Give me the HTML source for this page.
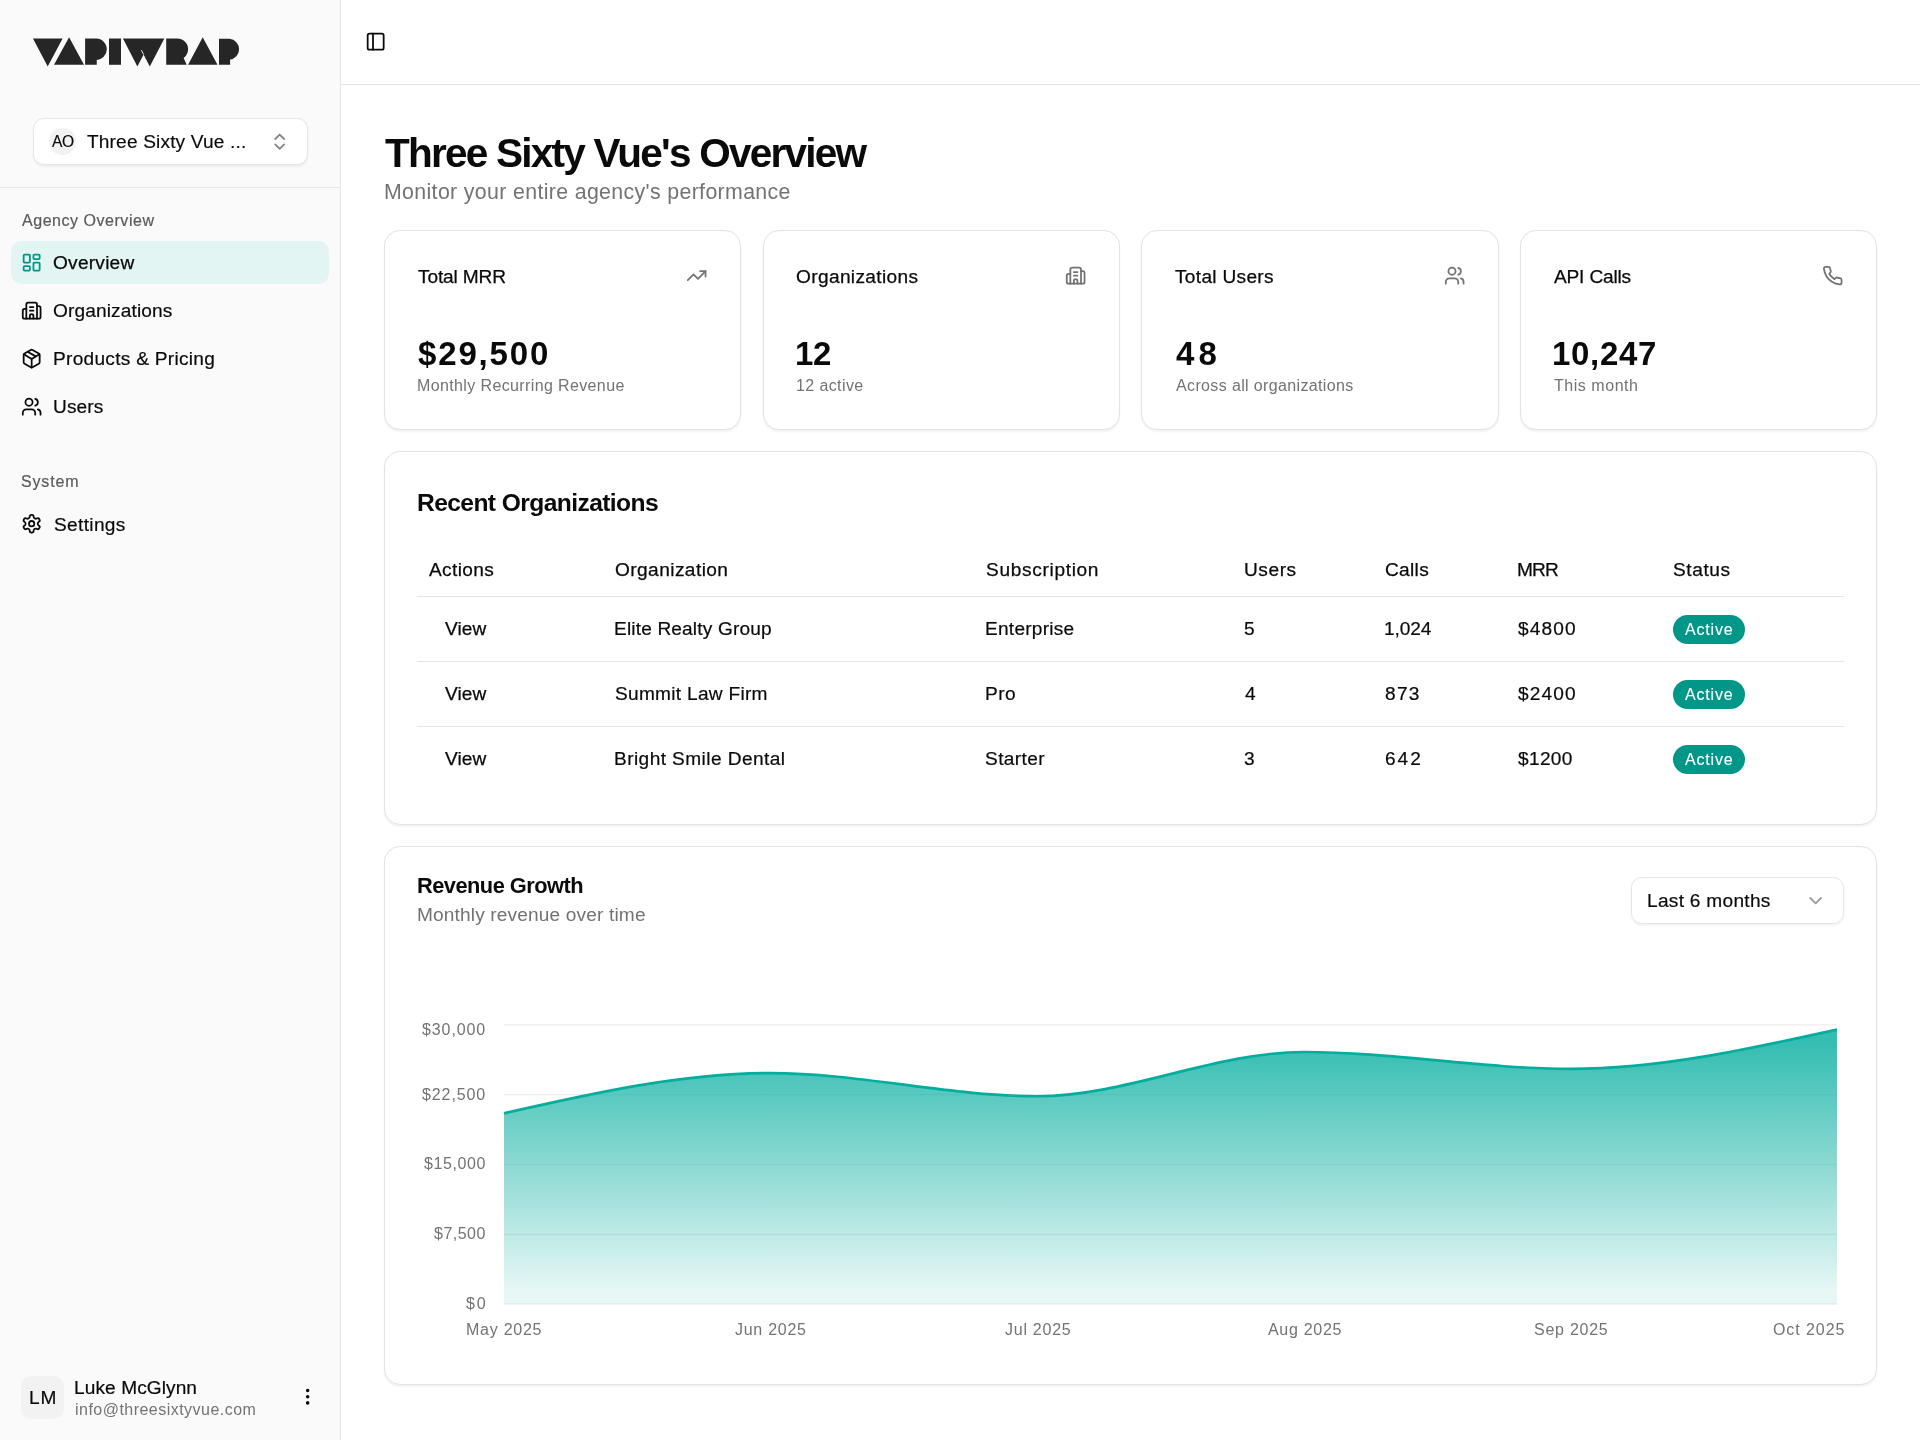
<!DOCTYPE html>
<html><head><meta charset="utf-8"><title>Overview</title><style>
html,body{margin:0;padding:0}
body{width:1920px;height:1440px;overflow:hidden;position:relative;background:#fff;font-family:"Liberation Sans",sans-serif;color:#0a0a0a}
.t{position:absolute;white-space:nowrap;line-height:1;will-change:transform}
.ic{position:absolute;overflow:visible}
.box{position:absolute;box-sizing:border-box}
.card{position:absolute;box-sizing:border-box;background:#fff;border:1.333px solid #e3e3e3;border-radius:16px;box-shadow:0 1.333px 2px rgba(0,0,0,0.05)}
</style></head>
<body>
<div class="box" style="left:0;top:0;width:340px;height:1440px;background:#fafafa"></div>
<div class="box" style="left:340px;top:0;width:1.333px;height:1440px;background:#e5e5e5"></div>
<div class="box" style="left:0;top:186.67px;width:340px;height:1.333px;background:#e5e5e5"></div>
<div class="box" style="left:341.33px;top:84px;width:1578.67px;height:1.333px;background:#e5e5e5"></div>
<div class="box" style="left:33px;top:117.5px;width:274.5px;height:47px;background:#fff;border:1.333px solid #e5e5e5;border-radius:10.67px;box-shadow:0 1.333px 2px rgba(0,0,0,0.05)"></div>
<div class="box" style="left:49.3px;top:127.9px;width:26.67px;height:26.67px;border-radius:50%;background:#f2f2f2"></div>
<div class="box" style="left:10.67px;top:241.33px;width:318.67px;height:42.67px;border-radius:10.67px;background:#e2f5f3"></div>
<div class="box" style="left:21.33px;top:1376px;width:42.67px;height:42.67px;border-radius:10.67px;background:#f2f2f2"></div>
<div class="card" style="left:384.00px;top:229.5px;width:357.33px;height:200.8px"></div>
<div class="card" style="left:762.67px;top:229.5px;width:357.33px;height:200.8px"></div>
<div class="card" style="left:1141.33px;top:229.5px;width:357.33px;height:200.8px"></div>
<div class="card" style="left:1520.00px;top:229.5px;width:357.33px;height:200.8px"></div>
<div class="card" style="left:384px;top:451.33px;width:1493.33px;height:373.5px"></div>
<div class="card" style="left:384px;top:845.6px;width:1493.33px;height:539.7px"></div>
<div class="box" style="left:417.33px;top:595.5px;width:1426.67px;height:1.333px;background:#e5e5e5"></div>
<div class="box" style="left:417.33px;top:660.67px;width:1426.67px;height:1.333px;background:#e5e5e5"></div>
<div class="box" style="left:417.33px;top:726px;width:1426.67px;height:1.333px;background:#e5e5e5"></div>
<div class="box" style="left:1672.5px;top:614.50px;width:72.3px;height:29.2px;border-radius:14.6px;background:#009688"></div>
<div class="box" style="left:1672.5px;top:679.70px;width:72.3px;height:29.2px;border-radius:14.6px;background:#009688"></div>
<div class="box" style="left:1672.5px;top:744.90px;width:72.3px;height:29.2px;border-radius:14.6px;background:#009688"></div>
<div class="box" style="left:1631px;top:877px;width:212.67px;height:47.33px;background:#fff;border:1.333px solid #e5e5e5;border-radius:10.67px;box-shadow:0 1.333px 2px rgba(0,0,0,0.05)"></div>
<svg style="position:absolute;left:0;top:0" width="260" height="90" viewBox="0 0 260 90"><g fill="#262626" stroke="#ffffff" stroke-width="0.8" paint-order="stroke"><path d="M32.95,38.5 L62.6,38.5 L47.7,66.4 Z"/><path d="M69.1,37.2 L84.0,64.8 L54.0,64.8 Z"/><path d="M85.1,38.5 L96.2,38.5 A10.6,10.7 0 0 1 96.2,59.9 L96.75,59.9 L96.75,64.8 L85.1,64.8 Z"/><path d="M109,38.5 L121,38.5 L121,64.8 L109,64.8 Z"/><path d="M122.95,38.5 L164.35,38.5 L149.8,66.4 L143.6,54.4 L137.4,66.4 Z"/><path d="M166.2,38.5 L177.2,38.5 A10.6,10.7 0 0 1 183.6,58.0 L186.7,64.8 L166.2,64.8 Z"/><path d="M202.7,37.2 L217.5,64.8 L188.1,64.8 Z"/><path d="M219,38.7 L229.6,38.7 A10.5,10.6 0 0 1 229.6,59.8 L230.1,59.8 L230.1,64.8 L219,64.8 Z"/></g><path d="M143.6,54.4 L141.3,50.2" stroke="#fff" stroke-width="0.9"/></svg>
<svg style="position:absolute;left:0;top:0" width="1920" height="1440" viewBox="0 0 1920 1440">
<defs><linearGradient id="g" x1="0" y1="0" x2="0" y2="1"><stop offset="5%" stop-color="#02ad9e" stop-opacity="0.8"/><stop offset="95%" stop-color="#02ad9e" stop-opacity="0.1"/></linearGradient></defs>
<g stroke="#eeeeee" stroke-width="1.3"><line x1="504" x2="1837" y1="1024.9" y2="1024.9"/><line x1="504" x2="1837" y1="1094.7" y2="1094.7"/><line x1="504" x2="1837" y1="1164.5" y2="1164.5"/><line x1="504" x2="1837" y1="1234.3" y2="1234.3"/><line x1="504" x2="1837" y1="1304.1" y2="1304.1"/></g>
<path d="M504.00,1113.30C592.87,1093.20,681.73,1073.10,770.60,1073.10C859.47,1073.10,948.33,1096.25,1037.20,1096.25C1126.07,1096.25,1214.93,1052.00,1303.80,1052.00C1392.67,1052.00,1481.53,1068.90,1570.40,1068.90C1659.27,1068.90,1748.13,1049.25,1837.00,1029.60L1837,1304.1L504,1304.1Z" fill="url(#g)"/>
<path d="M504.00,1113.30C592.87,1093.20,681.73,1073.10,770.60,1073.10C859.47,1073.10,948.33,1096.25,1037.20,1096.25C1126.07,1096.25,1214.93,1052.00,1303.80,1052.00C1392.67,1052.00,1481.53,1068.90,1570.40,1068.90C1659.27,1068.90,1748.13,1049.25,1837.00,1029.60" fill="none" stroke="#02ad9e" stroke-width="2.67"/>
</svg>
<svg class="ic" style="left:21.17px;top:251.95px;width:21.333px;height:21.333px" viewBox="0 0 24 24" fill="none" stroke="#009688" stroke-width="2" stroke-linecap="round" stroke-linejoin="round"><rect width="7" height="9" x="3" y="3" rx="1"/><rect width="7" height="5" x="14" y="3" rx="1"/><rect width="7" height="9" x="14" y="12" rx="1"/><rect width="7" height="5" x="3" y="16" rx="1"/></svg>
<svg class="ic" style="left:21.31px;top:299.92px;width:21.333px;height:21.333px" viewBox="0 0 24 24" fill="none" stroke="#0a0a0a" stroke-width="2" stroke-linecap="round" stroke-linejoin="round"><path d="M10 12h4"/><path d="M10 8h4"/><path d="M14 21v-3a2 2 0 0 0-4 0v3"/><path d="M6 10H4a2 2 0 0 0-2 2v7a2 2 0 0 0 2 2h16a2 2 0 0 0 2-2V9a2 2 0 0 0-2-2h-2"/><path d="M6 21V5a2 2 0 0 1 2-2h8a2 2 0 0 1 2 2v16"/></svg>
<svg class="ic" style="left:21.02px;top:348.09px;width:21.333px;height:21.333px" viewBox="0 0 24 24" fill="none" stroke="#0a0a0a" stroke-width="2" stroke-linecap="round" stroke-linejoin="round"><path d="M11 21.73a2 2 0 0 0 2 0l7-4A2 2 0 0 0 21 16V8a2 2 0 0 0-1-1.73l-7-4a2 2 0 0 0-2 0l-7 4A2 2 0 0 0 3 8v8a2 2 0 0 0 1 1.73z"/><path d="M12 22V12"/><path d="m3.3 7 7.703 4.734a2 2 0 0 0 1.994 0L20.7 7"/><path d="m7.5 4.27 9 5.15"/></svg>
<svg class="ic" style="left:21.31px;top:396.22px;width:21.333px;height:21.333px" viewBox="0 0 24 24" fill="none" stroke="#0a0a0a" stroke-width="2" stroke-linecap="round" stroke-linejoin="round"><path d="M16 21v-2a4 4 0 0 0-4-4H6a4 4 0 0 0-4 4v2"/><circle cx="9" cy="7" r="4"/><path d="M22 21v-2a4 4 0 0 0-3-3.87"/><path d="M16 3.13a4 4 0 0 1 0 7.75"/></svg>
<svg class="ic" style="left:20.99px;top:513.41px;width:21.333px;height:21.333px" viewBox="0 0 24 24" fill="none" stroke="#0a0a0a" stroke-width="2" stroke-linecap="round" stroke-linejoin="round"><path d="M12.22 2h-.44a2 2 0 0 0-2 2v.18a2 2 0 0 1-1 1.73l-.43.25a2 2 0 0 1-2 0l-.15-.08a2 2 0 0 0-2.73.73l-.22.38a2 2 0 0 0 .73 2.73l.15.1a2 2 0 0 1 1 1.72v.51a2 2 0 0 1-1 1.74l-.15.09a2 2 0 0 0-.73 2.73l.22.38a2 2 0 0 0 2.73.73l.15-.08a2 2 0 0 1 2 0l.43.25a2 2 0 0 1 1 1.73V20a2 2 0 0 0 2 2h.44a2 2 0 0 0 2-2v-.18a2 2 0 0 1 1-1.73l.43-.25a2 2 0 0 1 2 0l.15.08a2 2 0 0 0 2.73-.73l.22-.39a2 2 0 0 0-.73-2.73l-.15-.08a2 2 0 0 1-1-1.74v-.5a2 2 0 0 1 1-1.74l.15-.09a2 2 0 0 0 .73-2.73l-.22-.38a2 2 0 0 0-2.73-.73l-.15.08a2 2 0 0 1-2 0l-.43-.25a2 2 0 0 1-1-1.73V4a2 2 0 0 0-2-2z"/><circle cx="12" cy="12" r="3"/></svg>
<svg class="ic" style="left:269.07px;top:130.63px;width:21.333px;height:21.333px" viewBox="0 0 24 24" fill="none" stroke="#0a0a0a" stroke-width="2" stroke-linecap="round" stroke-linejoin="round" opacity="0.5"><path d="m7 15 5 5 5-5"/><path d="m7 9 5-5 5 5"/></svg>
<svg class="ic" style="left:297.08px;top:1386.14px;width:21.333px;height:21.333px" viewBox="0 0 24 24" fill="none" stroke="#0a0a0a" stroke-width="2" stroke-linecap="round" stroke-linejoin="round"><circle cx="12" cy="12" r="1"/><circle cx="12" cy="5" r="1"/><circle cx="12" cy="19" r="1"/></svg>
<svg class="ic" style="left:364.70px;top:31.40px;width:21.333px;height:21.333px" viewBox="0 0 24 24" fill="none" stroke="#0a0a0a" stroke-width="2" stroke-linecap="round" stroke-linejoin="round"><rect width="18" height="18" x="3" y="3" rx="2"/><path d="M9 3v18"/></svg>
<svg class="ic" style="left:686.20px;top:265.40px;width:21.333px;height:21.333px" viewBox="0 0 24 24" fill="none" stroke="#737373" stroke-width="2" stroke-linecap="round" stroke-linejoin="round"><polyline points="22 7 13.5 15.5 8.5 10.5 2 17"/><polyline points="16 7 22 7 22 13"/></svg>
<svg class="ic" style="left:1064.87px;top:265.40px;width:21.333px;height:21.333px" viewBox="0 0 24 24" fill="none" stroke="#737373" stroke-width="2" stroke-linecap="round" stroke-linejoin="round"><path d="M10 12h4"/><path d="M10 8h4"/><path d="M14 21v-3a2 2 0 0 0-4 0v3"/><path d="M6 10H4a2 2 0 0 0-2 2v7a2 2 0 0 0 2 2h16a2 2 0 0 0 2-2V9a2 2 0 0 0-2-2h-2"/><path d="M6 21V5a2 2 0 0 1 2-2h8a2 2 0 0 1 2 2v16"/></svg>
<svg class="ic" style="left:1443.53px;top:265.40px;width:21.333px;height:21.333px" viewBox="0 0 24 24" fill="none" stroke="#737373" stroke-width="2" stroke-linecap="round" stroke-linejoin="round"><path d="M16 21v-2a4 4 0 0 0-4-4H6a4 4 0 0 0-4 4v2"/><circle cx="9" cy="7" r="4"/><path d="M22 21v-2a4 4 0 0 0-3-3.87"/><path d="M16 3.13a4 4 0 0 1 0 7.75"/></svg>
<svg class="ic" style="left:1822.20px;top:265.40px;width:21.333px;height:21.333px" viewBox="0 0 24 24" fill="none" stroke="#737373" stroke-width="2" stroke-linecap="round" stroke-linejoin="round"><path d="M22 16.92v3a2 2 0 0 1-2.18 2 19.79 19.79 0 0 1-8.63-3.07 19.5 19.5 0 0 1-6-6 19.79 19.79 0 0 1-3.07-8.67A2 2 0 0 1 4.11 2h3a2 2 0 0 1 2 1.72 12.84 12.84 0 0 0 .7 2.81 2 2 0 0 1-.45 2.11L8.09 9.91a16 16 0 0 0 6 6l1.27-1.27a2 2 0 0 1 2.11-.45 12.84 12.84 0 0 0 2.81.7A2 2 0 0 1 22 16.92z"/></svg>
<svg class="ic" style="left:1805.16px;top:890.09px;width:21.333px;height:21.333px" viewBox="0 0 24 24" fill="none" stroke="#737373" stroke-width="2" stroke-linecap="round" stroke-linejoin="round" opacity="0.7"><path d="m6 9 6 6 6-6"/></svg>
<div class="t" style="left:52.00px;top:133.99px;font-size:15.6px;letter-spacing:-0.405px;-webkit-text-stroke:0.15px currentColor;">AO</div>
<div class="t" style="left:87.10px;top:131.63px;font-size:19.1px;letter-spacing:0.161px;-webkit-text-stroke:0.15px currentColor;">Three Sixty Vue ...</div>
<div class="t" style="left:22.20px;top:212.75px;font-size:16.0px;color:#5a5a5a;letter-spacing:0.533px;-webkit-text-stroke:0.2px currentColor;">Agency Overview</div>
<div class="t" style="left:53.40px;top:252.63px;font-size:19.1px;letter-spacing:0.242px;-webkit-text-stroke:0.25px currentColor;">Overview</div>
<div class="t" style="left:53.30px;top:300.83px;font-size:19.1px;letter-spacing:0.125px;-webkit-text-stroke:0.2px currentColor;">Organizations</div>
<div class="t" style="left:52.70px;top:348.83px;font-size:19.1px;letter-spacing:0.283px;-webkit-text-stroke:0.2px currentColor;">Products &amp; Pricing</div>
<div class="t" style="left:52.80px;top:396.83px;font-size:19.1px;letter-spacing:0.118px;-webkit-text-stroke:0.2px currentColor;">Users</div>
<div class="t" style="left:21.40px;top:473.55px;font-size:16.0px;color:#5a5a5a;letter-spacing:0.837px;-webkit-text-stroke:0.2px currentColor;">System</div>
<div class="t" style="left:53.50px;top:514.63px;font-size:19.1px;letter-spacing:0.334px;-webkit-text-stroke:0.2px currentColor;">Settings</div>
<div class="t" style="left:29.00px;top:1387.63px;font-size:19.1px;letter-spacing:0.977px;-webkit-text-stroke:0.2px currentColor;">LM</div>
<div class="t" style="left:74.00px;top:1378.03px;font-size:19.1px;letter-spacing:0.086px;-webkit-text-stroke:0.2px currentColor;">Luke McGlynn</div>
<div class="t" style="left:74.50px;top:1402.25px;font-size:16.0px;color:#737373;letter-spacing:0.469px;">info@threesixtyvue.com</div>
<div class="t" style="left:385.00px;top:133.21px;font-size:40.5px;font-weight:700;letter-spacing:-1.753px;">Three Sixty Vue's Overview</div>
<div class="t" style="left:383.90px;top:182.47px;font-size:21.3px;color:#737373;letter-spacing:0.361px;">Monitor your entire agency's performance</div>
<div class="t" style="left:418.00px;top:266.58px;font-size:19.1px;letter-spacing:-0.132px;-webkit-text-stroke:0.25px currentColor;">Total MRR</div>
<div class="t" style="left:418.40px;top:337.31px;font-size:33px;font-weight:700;letter-spacing:1.842px;">$29,500</div>
<div class="t" style="left:417.10px;top:377.75px;font-size:16.0px;color:#737373;letter-spacing:0.374px;">Monthly Recurring Revenue</div>
<div class="t" style="left:796.17px;top:266.58px;font-size:19.1px;letter-spacing:0.359px;-webkit-text-stroke:0.25px currentColor;">Organizations</div>
<div class="t" style="left:795.00px;top:337.31px;font-size:33px;font-weight:700;letter-spacing:-0.422px;">12</div>
<div class="t" style="left:795.87px;top:377.75px;font-size:16.0px;color:#737373;letter-spacing:0.395px;">12 active</div>
<div class="t" style="left:1175.33px;top:266.58px;font-size:19.1px;letter-spacing:0.302px;-webkit-text-stroke:0.25px currentColor;">Total Users</div>
<div class="t" style="left:1175.73px;top:337.31px;font-size:33px;font-weight:700;letter-spacing:4.116px;">48</div>
<div class="t" style="left:1175.73px;top:377.75px;font-size:16.0px;color:#737373;letter-spacing:0.362px;">Across all organizations</div>
<div class="t" style="left:1554.40px;top:266.58px;font-size:19.1px;letter-spacing:-0.174px;-webkit-text-stroke:0.25px currentColor;">API Calls</div>
<div class="t" style="left:1552.34px;top:337.31px;font-size:33px;font-weight:700;letter-spacing:0.673px;">10,247</div>
<div class="t" style="left:1554.10px;top:377.75px;font-size:16.0px;color:#737373;letter-spacing:0.540px;">This month</div>
<div class="t" style="left:416.70px;top:491.37px;font-size:24.6px;font-weight:700;letter-spacing:-0.590px;">Recent Organizations</div>
<div class="t" style="left:429.20px;top:560.33px;font-size:19.1px;letter-spacing:0.353px;-webkit-text-stroke:0.25px currentColor;">Actions</div>
<div class="t" style="left:614.90px;top:560.33px;font-size:19.1px;letter-spacing:0.430px;-webkit-text-stroke:0.25px currentColor;">Organization</div>
<div class="t" style="left:985.50px;top:560.33px;font-size:19.1px;letter-spacing:0.674px;-webkit-text-stroke:0.25px currentColor;">Subscription</div>
<div class="t" style="left:1243.50px;top:560.33px;font-size:19.1px;letter-spacing:0.568px;-webkit-text-stroke:0.25px currentColor;">Users</div>
<div class="t" style="left:1384.90px;top:560.33px;font-size:19.1px;letter-spacing:0.324px;-webkit-text-stroke:0.25px currentColor;">Calls</div>
<div class="t" style="left:1517.25px;top:560.33px;font-size:19.1px;letter-spacing:-0.802px;-webkit-text-stroke:0.25px currentColor;">MRR</div>
<div class="t" style="left:1672.70px;top:560.33px;font-size:19.1px;letter-spacing:0.600px;-webkit-text-stroke:0.25px currentColor;">Status</div>
<div class="t" style="left:445.00px;top:619.03px;font-size:19.1px;letter-spacing:0.080px;-webkit-text-stroke:0.25px currentColor;">View</div>
<div class="t" style="left:614.30px;top:619.03px;font-size:19.1px;letter-spacing:0.155px;-webkit-text-stroke:0.2px currentColor;">Elite Realty Group</div>
<div class="t" style="left:984.50px;top:619.03px;font-size:19.1px;letter-spacing:0.241px;-webkit-text-stroke:0.2px currentColor;">Enterprise</div>
<div class="t" style="left:1244.20px;top:619.03px;font-size:19.1px;-webkit-text-stroke:0.2px currentColor;">5</div>
<div class="t" style="left:1384.20px;top:619.03px;font-size:19.1px;letter-spacing:-0.094px;-webkit-text-stroke:0.2px currentColor;">1,024</div>
<div class="t" style="left:1518.30px;top:619.03px;font-size:19.1px;letter-spacing:1.127px;-webkit-text-stroke:0.2px currentColor;">$4800</div>
<div class="t" style="left:1685.40px;top:621.65px;font-size:16.0px;color:#ffffff;letter-spacing:0.806px;-webkit-text-stroke:0.1px currentColor;">Active</div>
<div class="t" style="left:445.00px;top:684.23px;font-size:19.1px;letter-spacing:0.080px;-webkit-text-stroke:0.25px currentColor;">View</div>
<div class="t" style="left:615.00px;top:684.23px;font-size:19.1px;letter-spacing:0.282px;-webkit-text-stroke:0.2px currentColor;">Summit Law Firm</div>
<div class="t" style="left:984.50px;top:684.23px;font-size:19.1px;letter-spacing:0.500px;-webkit-text-stroke:0.2px currentColor;">Pro</div>
<div class="t" style="left:1244.50px;top:684.23px;font-size:19.1px;-webkit-text-stroke:0.2px currentColor;">4</div>
<div class="t" style="left:1384.80px;top:684.23px;font-size:19.1px;letter-spacing:1.277px;-webkit-text-stroke:0.2px currentColor;">873</div>
<div class="t" style="left:1518.30px;top:684.23px;font-size:19.1px;letter-spacing:1.102px;-webkit-text-stroke:0.2px currentColor;">$2400</div>
<div class="t" style="left:1685.40px;top:686.85px;font-size:16.0px;color:#ffffff;letter-spacing:0.806px;-webkit-text-stroke:0.1px currentColor;">Active</div>
<div class="t" style="left:445.00px;top:749.43px;font-size:19.1px;letter-spacing:0.080px;-webkit-text-stroke:0.25px currentColor;">View</div>
<div class="t" style="left:614.30px;top:749.43px;font-size:19.1px;letter-spacing:0.420px;-webkit-text-stroke:0.2px currentColor;">Bright Smile Dental</div>
<div class="t" style="left:985.20px;top:749.43px;font-size:19.1px;letter-spacing:0.390px;-webkit-text-stroke:0.2px currentColor;">Starter</div>
<div class="t" style="left:1244.20px;top:749.43px;font-size:19.1px;-webkit-text-stroke:0.2px currentColor;">3</div>
<div class="t" style="left:1384.70px;top:749.43px;font-size:19.1px;letter-spacing:1.977px;-webkit-text-stroke:0.2px currentColor;">642</div>
<div class="t" style="left:1518.30px;top:749.43px;font-size:19.1px;letter-spacing:0.327px;-webkit-text-stroke:0.2px currentColor;">$1200</div>
<div class="t" style="left:1685.40px;top:752.05px;font-size:16.0px;color:#ffffff;letter-spacing:0.806px;-webkit-text-stroke:0.1px currentColor;">Active</div>
<div class="t" style="left:417.30px;top:874.54px;font-size:21.8px;font-weight:700;letter-spacing:-0.516px;">Revenue Growth</div>
<div class="t" style="left:417.20px;top:904.63px;font-size:19.1px;color:#737373;letter-spacing:0.148px;">Monthly revenue over time</div>
<div class="t" style="left:1647.40px;top:891.23px;font-size:19.1px;letter-spacing:0.290px;-webkit-text-stroke:0.2px currentColor;">Last 6 months</div>
<div class="t" style="left:422.30px;top:1021.95px;font-size:16.0px;color:#737373;letter-spacing:0.894px;">$30,000</div>
<div class="t" style="left:422.30px;top:1086.55px;font-size:16.0px;color:#737373;letter-spacing:0.894px;">$22,500</div>
<div class="t" style="left:424.20px;top:1156.45px;font-size:16.0px;color:#737373;letter-spacing:0.577px;">$15,000</div>
<div class="t" style="left:434.10px;top:1226.25px;font-size:16.0px;color:#737373;letter-spacing:0.492px;">$7,500</div>
<div class="t" style="left:465.80px;top:1296.15px;font-size:16.0px;color:#737373;letter-spacing:1.902px;">$0</div>
<div class="t" style="left:465.80px;top:1321.65px;font-size:16.0px;color:#737373;letter-spacing:0.748px;">May 2025</div>
<div class="t" style="left:735.30px;top:1321.65px;font-size:16.0px;color:#737373;letter-spacing:0.723px;">Jun 2025</div>
<div class="t" style="left:1004.50px;top:1321.65px;font-size:16.0px;color:#737373;letter-spacing:0.744px;">Jul 2025</div>
<div class="t" style="left:1267.50px;top:1321.65px;font-size:16.0px;color:#737373;letter-spacing:0.699px;">Aug 2025</div>
<div class="t" style="left:1534.00px;top:1321.65px;font-size:16.0px;color:#737373;letter-spacing:0.742px;">Sep 2025</div>
<div class="t" style="left:1772.70px;top:1321.65px;font-size:16.0px;color:#737373;letter-spacing:0.924px;">Oct 2025</div>
</body></html>
